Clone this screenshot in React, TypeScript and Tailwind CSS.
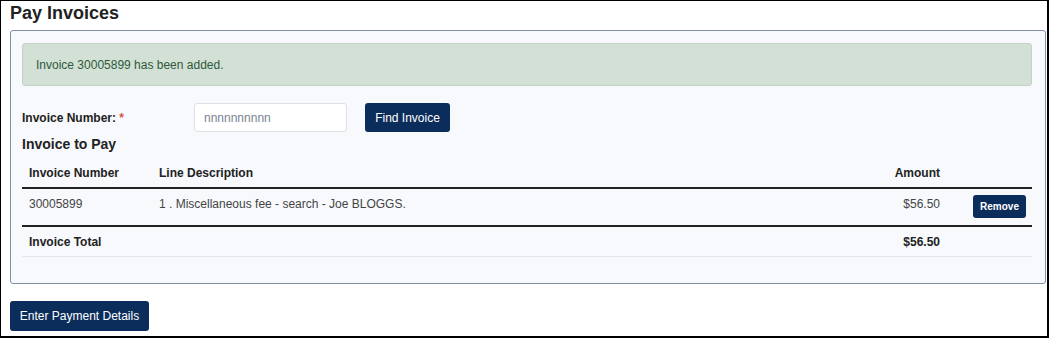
import React from 'react';

const font = { fontFamily: '"Liberation Sans", Arial, sans-serif' };

interface LineItem {
  invoiceNumber: string;
  description: string;
  amount: string;
}

const items: LineItem[] = [
  {
    invoiceNumber: '30005899',
    description: '1 . Miscellaneous fee - search - Joe BLOGGS.',
    amount: '$56.50',
  },
];

export default function App() {
  return (
    <div
      style={font}
      className="w-[1049px] h-[338px] bg-white border-l border-t border-r-2 border-b-2 border-black pl-[9px] pr-[1px] text-[12px] text-[#333]"
    >
      <h1 className="mt-[1px] text-[18px] leading-[22px] font-bold text-[#222]">Pay Invoices</h1>

      <div className="mt-[6px] w-[1036px] rounded-[3px] border border-[#7d90a8] bg-[#f7f9fc] pt-[12px] pb-[26px] pl-[11px] pr-[13px]">
        {/* Success message */}
        <div className="h-[43px] rounded-[3px] border border-[#c3d4c6] bg-[#d3e0d5] pl-[13px] flex items-center text-[#2e5a3b] leading-[14px]">
          Invoice 30005899 has been added.
        </div>

        {/* Search form */}
        <div className="mt-[17px] flex items-center h-[29px]">
          <label className="w-[172px] font-bold text-[#222]">
            Invoice Number: <span className="text-[#d9534f]">*</span>
          </label>
          <input
            type="text"
            placeholder="nnnnnnnnnn"
            style={font}
            className="w-[153px] h-[29px] rounded-[3px] border border-[#dce1e7] bg-white pl-[9px] text-[12px] placeholder:text-[#7a8492] outline-none"
          />
          <button className="ml-[18px] w-[85px] h-[29px] rounded-[3px] bg-[#0b2d5b] text-white text-[12px]">
            Find Invoice
          </button>
        </div>

        <h2 className="mt-[2px] h-[20px] leading-[20px] text-[14px] font-bold text-[#222]">Invoice to Pay</h2>

        {/* Table */}
        <div className="h-[35px] pt-[4px] flex items-center font-bold text-[#222] border-b-2 border-[#222]">
          <div className="w-[137px] pl-[7px]">Invoice Number</div>
          <div className="flex-1">Line Description</div>
          <div className="w-[120px] text-right">Amount</div>
          <div className="w-[92px]" />
        </div>

        {items.map((item) => (
          <div key={item.invoiceNumber} className="h-[38px] flex items-start text-[#444] border-b-2 border-[#222]">
            <div className="w-[137px] pl-[7px] pt-[8px] leading-[14px]">{item.invoiceNumber}</div>
            <div className="flex-1 pt-[8px] leading-[14px]">{item.description}</div>
            <div className="w-[120px] pt-[8px] leading-[14px] text-right">{item.amount}</div>
            <div className="w-[92px] pt-[6px] pr-[6px] flex justify-end">
              <button className="w-[53px] h-[23px] rounded-[3px] bg-[#0b2d5b] text-white text-[10px] font-bold">
                Remove
              </button>
            </div>
          </div>
        ))}

        <div className="h-[30px] flex items-center font-bold text-[#222] border-b border-[#e3e6ea]">
          <div className="w-[137px] pl-[7px]">Invoice Total</div>
          <div className="flex-1" />
          <div className="w-[120px] text-right">$56.50</div>
          <div className="w-[92px]" />
        </div>
      </div>

      <button className="mt-[17px] w-[139px] h-[30px] rounded-[3px] bg-[#0b2d5b] text-white text-[12px]">
        Enter Payment Details
      </button>
    </div>
  );
}
